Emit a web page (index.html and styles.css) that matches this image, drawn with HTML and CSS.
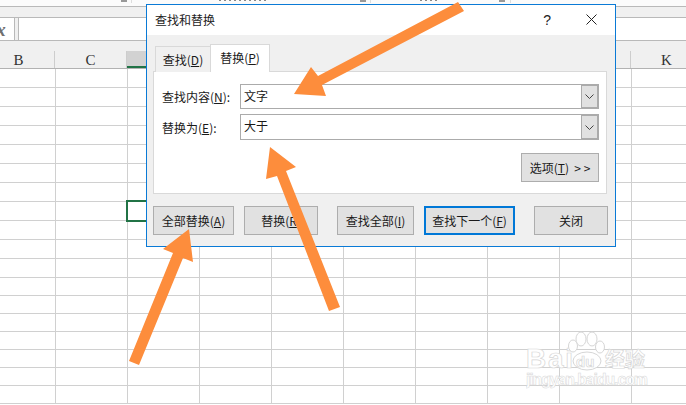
FILE: index.html
```html
<!DOCTYPE html>
<html lang="zh">
<head>
<meta charset="utf-8">
<title>查找和替换</title>
<link rel="stylesheet" href="styles.css">
</head>
<body>
<div class="sheet">
  <div class="ribbon"></div>
  <div class="ribbon-foot"></div>
  <div class="formula">
    <div class="name-box"><span class="fx">fx</span></div>
    <div class="formula-input"></div>
  </div>
  <div class="head-band">
    <div class="columns">
      <div class="col">B</div><div class="col">C</div><div class="col col-on"></div><div class="col"></div><div class="col"></div><div class="col"></div><div class="col"></div><div class="col"></div><div class="col"></div><div class="col">K</div>
    </div>
  </div>
  <div class="grid">
    <div class="row"></div><div class="row"></div><div class="row"></div><div class="row"></div>
    <div class="row"></div><div class="row"></div><div class="row"></div><div class="row"></div>
    <div class="row"></div><div class="row"></div><div class="row"></div>
    <div class="row row-s"></div><div class="row row-s"></div><div class="row row-s"></div><div class="row row-s"></div>
    <div class="row row-s"></div><div class="row row-s"></div><div class="row row-s"></div>
  </div>

  <div class="active-cell"></div>

  <svg class="watermark" width="140" height="72" viewBox="0 0 140 72">
    <text class="wm-big" x="0" y="37" textLength="47">Bai</text>
    <ellipse class="wm-paw" cx="47" cy="15" rx="4.5" ry="6"/>
    <ellipse class="wm-paw" cx="55" cy="8" rx="5" ry="7"/>
    <ellipse class="wm-paw" cx="66" cy="8" rx="5" ry="7"/>
    <ellipse class="wm-paw" cx="74" cy="16" rx="4.5" ry="6"/>
    <ellipse class="wm-paw" cx="61" cy="30" rx="14" ry="9"/>
    <text class="wm-du" x="50" y="36">du</text>
    <text class="wm-cn" x="79" y="36">经验</text>
    <text class="wm-url" x="0" y="54" textLength="122">jingyan.baidu.com</text>
  </svg>

  <div class="dialog">
    <div class="titlebar">
      <span class="title">查找和替换</span>
      <span class="help">?</span>
      <svg class="close" width="11" height="11" viewBox="0 0 11 11"><path d="M0.5 0.5 L10.5 10.5 M10.5 0.5 L0.5 10.5"/></svg>
    </div>
    <div class="dialog-body">
      <div class="tabs">
        <div class="tab">查找(<u>D</u>)</div>
        <div class="tab tab-on">替换(<u>P</u>)</div>
      </div>
      <div class="panel">
        <div class="field">
          <label class="label">查找内容(<u>N</u>):</label>
          <div class="combo"><span class="combo-text">文字</span><span class="combo-btn"><svg width="9" height="5" viewBox="0 0 9 5"><path d="M0.5 0.5 L4.5 4.5 L8.5 0.5"/></svg></span></div>
        </div>
        <div class="field field-2">
          <label class="label">替换为(<u>E</u>):</label>
          <div class="combo combo-2"><span class="combo-text">大于</span><span class="combo-btn"><svg width="9" height="5" viewBox="0 0 9 5"><path d="M0.5 0.5 L4.5 4.5 L8.5 0.5"/></svg></span></div>
        </div>
        <div class="options-row"><button class="btn btn-options">选项(<u>T</u>)&nbsp; &gt; &gt;</button></div>
      </div>
      <div class="actions">
        <button class="btn btn-all">全部替换(<u>A</u>)</button>
        <button class="btn btn-one">替换(<u>R</u>)</button>
        <button class="btn btn-findall">查找全部(<u>I</u>)</button>
        <button class="btn btn-next">查找下一个(<u>F</u>)</button>
        <button class="btn btn-close">关闭</button>
      </div>
    </div>
  </div>

  <svg class="arrows" width="686" height="405" viewBox="0 0 686 405">
    <polygon points="458,2 464,11 322,85 326,96 294,94 311,67 318,76"/>
    <polygon points="270,147 296,167 286,171 340,307 329,311 277,176 266,179"/>
    <polygon points="189,229 193,262 183,258 139,365 129,361 173,253 163,249"/>
  </svg>
</div>
</body>
</html>
```

FILE: styles.css
```css
* { box-sizing: border-box; }
html, body { margin: 0; padding: 0; background: #fff; }
.sheet {
  position: relative;
  width: 686px;
  height: 405px;
  overflow: hidden;
  font-family: "Noto Sans CJK SC", "Liberation Sans", sans-serif;
  font-size: 12px;
  color: #1a1a1a;
}

/* Excel chrome behind the dialog */
.ribbon {
  height: 7px;
  background-color: #fbfbfb;
  border-bottom: 1px solid #b9b9b9;
  background-image:
    linear-gradient(#999, #999), linear-gradient(#ddd, #ddd),
    repeating-linear-gradient(to right, #888 0 2px, transparent 2px 5px),
    linear-gradient(#999, #999), linear-gradient(#ddd, #ddd),
    repeating-linear-gradient(to right, #888 0 2px, transparent 2px 5px),
    linear-gradient(#999, #999), linear-gradient(#ddd, #ddd);
  background-repeat: no-repeat;
  background-size: 6px 2px, 1px 3px, 48px 1px, 6px 2px, 1px 3px, 18px 1px, 6px 2px, 1px 3px;
  background-position: 121px 0, 131px 0, 219px 0, 360px 0, 370px 0, 420px 0, 499px 0, 510px 0;
}
.ribbon-foot { height: 10px; background: #f0f0f0; }
.formula {
  display: flex;
  height: 24px;
  background: #f0f0f0;
  border-top: 1px solid #b9b9b9;
  border-bottom: 1px solid #b9b9b9;
}
.name-box {
  width: 15px;
  background: #fff;
  border-right: 1px solid #b9b9b9;
  overflow: hidden;
}
.fx {
  display: block;
  margin-left: -10px;
  font: italic bold 19px/24px "Liberation Serif", serif;
  color: #707070;
}
.formula-input {
  flex: 1;
  margin-left: 3px;
  background: #fff;
  border-left: 1px solid #b9b9b9;
}
.head-band {
  height: 28px;
  padding-top: 10px;
  background: #f0f0f0;
  border-bottom: 1px solid #b2b2b2;
}
.columns { display: flex; height: 17px; margin-left: -17px; }
.col {
  flex: 0 0 72px;
  border-right: 1px solid #cdcdcd;
  text-align: center;
  font: 15px/19px "Liberation Serif", serif;
  color: #333;
}
.col-on {
  background: #d2d2d2;
  border-bottom: 2px solid #217346;
}
.grid {
  background-image: linear-gradient(to right, #d0d0d0 1px, transparent 1px);
  background-size: 72px 100%;
  background-position: 55px 0;
}
.row { height: 19px; border-bottom: 1px solid #d0d0d0; }
.row-s { height: 18px; }
.active-cell {
  position: absolute;
  left: 126px;
  top: 200px;
  width: 40px;
  height: 22px;
  border: 2px solid #217346;
}

/* Watermark */
.watermark { position: absolute; left: 526px; top: 331px; }
.wm-big, .wm-du, .wm-cn, .wm-url {
  fill: #fff;
  stroke: #d6d6d6;
  stroke-width: 0.7;
  font-family: "Liberation Sans", "Noto Sans CJK SC", sans-serif;
  font-weight: 700;
}
.wm-big { font-size: 28px; }
.wm-du { font-size: 15px; }
.wm-cn { font-family: "Noto Sans CJK SC", sans-serif; font-size: 20px; }
.wm-url { font-size: 16px; stroke-width: 0.5; }
.wm-paw { fill: #fff; stroke: #d6d6d6; stroke-width: 1; }

/* Dialog window */
.dialog {
  position: absolute;
  left: 146px;
  top: 4px;
  width: 470px;
  height: 243px;
  display: flex;
  flex-direction: column;
  background: #f0f0f0;
  border: 1px solid #0a7ad6;
}
.titlebar {
  display: flex;
  align-items: center;
  height: 30px;
  padding: 0 0 1px 8px;
  background: #fff;
}
.title { flex: 1; font-size: 12px; color: #222; padding-bottom: 1px; }
.help { margin-right: 35px; font: 14px/1 "Liberation Sans", sans-serif; color: #222; }
.close { margin-right: 18px; }
.close path { fill: none; stroke: #222; stroke-width: 1; }
.dialog-body { flex: 1; padding: 9px 7px 10px 6px; }
.tabs { display: flex; align-items: flex-end; height: 28px; padding-left: 2px; margin-bottom: -1px; position: relative; z-index: 1; }
.tab {
  width: 56px;
  height: 26px;
  line-height: 25px;
  text-align: center;
  background: #f0f0f0;
  border: 1px solid #d9d9d9;
  border-bottom: 0;
  font-size: 12px;
}
.tab-on {
  width: 60px;
  height: 28px;
  margin-left: -1px;
  background: #fff;
  line-height: 26px;
}
.panel {
  width: 454px;
  height: 123px;
  padding: 12px 7px 0 8px;
  background: #fff;
  border: 1px solid #d9d9d9;
}
.field { display: flex; align-items: center; height: 25px; }
.field-2 { height: 26px; margin-top: 5px; }
.label { flex: 0 0 78px; font-size: 12px; }
.combo {
  flex: 1;
  display: flex;
  height: 25px;
  background: #fff;
  border: 1px solid #ababab;
}
.combo-2 { height: 26px; }
.combo-text { flex: 1; padding-left: 3px; line-height: 22px; font-size: 12px; }
.combo-btn {
  display: flex;
  align-items: center;
  justify-content: center;
  width: 17px;
  background: #e1e1e1;
  border: 1px solid #ababab;
}
.combo-btn path { fill: none; stroke: #444; stroke-width: 1; }
.options-row { display: flex; justify-content: flex-end; margin-top: 13px; }
.btn {
  height: 29px;
  padding: 0;
  background: #e1e1e1;
  border: 1px solid #adadad;
  font: 12px "Noto Sans CJK SC", "Liberation Sans", sans-serif;
  color: #1a1a1a;
  white-space: nowrap;
}
.btn-options { width: 78px; }
.actions { display: flex; margin-top: 12px; }
.btn-all { width: 81px; }
.btn-one { width: 74px; margin-left: 10px; }
.btn-findall { width: 77px; margin-left: 19px; }
.btn-next { width: 91px; margin-left: 10px; border: 2px solid #0078d7; }
.btn-close { width: 74px; margin-left: 19px; }

/* Annotation arrows */
.arrows { position: absolute; left: 0; top: 0; }
.arrows polygon { fill: #fd8d3c; }
```
